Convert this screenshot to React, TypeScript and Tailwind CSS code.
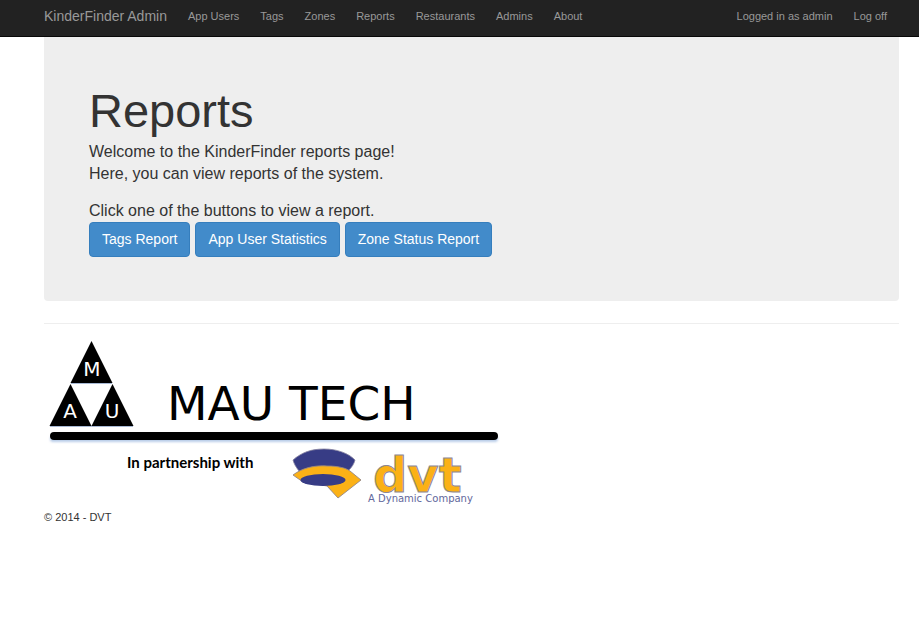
const navItems = ["App Users", "Tags", "Zones", "Reports", "Restaurants", "Admins", "About"];
const reports = ["Tags Report", "App User Statistics", "Zone Status Report"];

function NavLink({ label }: { label: string }) {
  return (
    <a href="#" className="text-[11px] leading-4 whitespace-nowrap text-[#999999] hover:text-white">
      {label}
    </a>
  );
}

function Navbar() {
  return (
    <header className="border-b border-[#080808] bg-[#222222]">
      <nav className="flex h-9 items-start gap-[21px] pt-2 pr-8 pl-11">
        <a href="#" className="text-[14px] leading-4 whitespace-nowrap text-[#999999]">
          KinderFinder Admin
        </a>
        <div className="flex grow gap-[21px]">
          {navItems.map((item) => (
            <NavLink key={item} label={item} />
          ))}
        </div>
        <div className="flex gap-[21px]">
          <NavLink label="Logged in as admin" />
          <NavLink label="Log off" />
        </div>
      </nav>
    </header>
  );
}

function MauTechLogo() {
  return (
    <svg width="460" height="170" viewBox="44 338 460 170" role="img" aria-label="MAU Tech in partnership with DVT">
      <defs>
        <filter id="soft" x="-5%" y="-100%" width="110%" height="400%">
          <feGaussianBlur stdDeviation="1" />
        </filter>
      </defs>
      <rect x="50" y="436" width="448" height="6" rx="3" fill="#b9cde8" filter="url(#soft)" />
      <path d="M91.500 341L112.500 383H70.500ZM70.500 384L91.500 426H49.500ZM112.500 384L133.500 426H91.500Z" fill="#000" />
      <path d="M71 383.500H112M50 426.500H133" stroke="#a9bad5" strokeWidth="1" />
      <g fill="#fff" fontFamily="'DejaVu Sans', sans-serif" fontSize="20" textAnchor="middle">
        <text x="92" y="376">M</text>
        <text x="70" y="418">A</text>
        <text x="112" y="418">U</text>
      </g>
      <text x="167" y="420" fontFamily="'DejaVu Sans', sans-serif" fontSize="47" fill="#000">
        MAU TECH
      </text>
      <rect x="50" y="432" width="448" height="8" rx="4" fill="#000" />
      <text x="127" y="468" fontFamily="Lato, sans-serif" fontWeight="700" fontSize="15" fill="#000">
        In partnership with
      </text>
      <path d="M293 460C302 452 312 449 324 449C337 449 348 453 355 460C354 464 352 467 348 471L299 471C296 467 294 464 293 460Z" fill="#373c85" stroke="#8582a0" strokeWidth="0.8" />
      <path d="M293 475C302 468 315 465 327 466C338 466 346 468 350 471L361 480L338 498L327 486L303 482Z" fill="#fbb116" stroke="#948786" strokeWidth="0.9" />
      <ellipse cx="323" cy="480" rx="22.500" ry="6" fill="#373c85" />
      <text x="373" y="492" fontFamily="'DejaVu Sans', sans-serif" fontWeight="700" fontSize="48" fill="#fbb116" stroke="#8a8798" strokeWidth="1">
        dvt
      </text>
      <text x="368" y="502" fontFamily="'DejaVu Sans', sans-serif" fontSize="10" fill="#62679c">
        A Dynamic Company
      </text>
    </svg>
  );
}

export default function App() {
  return (
    <div className="bg-white font-['Liberation_Sans',Arial,sans-serif] text-[#333333]">
      <Navbar />
      <div className="pr-5 pl-11">
        <main className="rounded-b bg-[#eeeeee] px-[45px] pt-12 pb-11">
          <h1 className="mb-[5px] text-[47px] leading-[51px]">Reports</h1>
          <p className="mb-[15px] text-[16px] leading-[22px]">
            Welcome to the KinderFinder reports page!
            <br />
            Here, you can view reports of the system.
          </p>
          <p className="text-[16px] leading-[22px]">Click one of the buttons to view a report.</p>
          <div className="flex flex-wrap gap-[5px]">
            {reports.map((report) => (
              <button
                key={report}
                type="button"
                className="rounded border border-[#357ebd] bg-[#428bca] px-3 py-[6px] text-[14px] leading-[21px] text-white hover:bg-[#3276b1]"
              >
                {report}
              </button>
            ))}
          </div>
        </main>
        <hr className="mt-[22px] mb-[14px] border-[#eeeeee]" />
        <footer className="flex flex-col items-start gap-[2px]">
          <MauTechLogo />
          <p className="text-[11px] leading-[15px]">© 2014 - DVT</p>
        </footer>
      </div>
    </div>
  );
}
